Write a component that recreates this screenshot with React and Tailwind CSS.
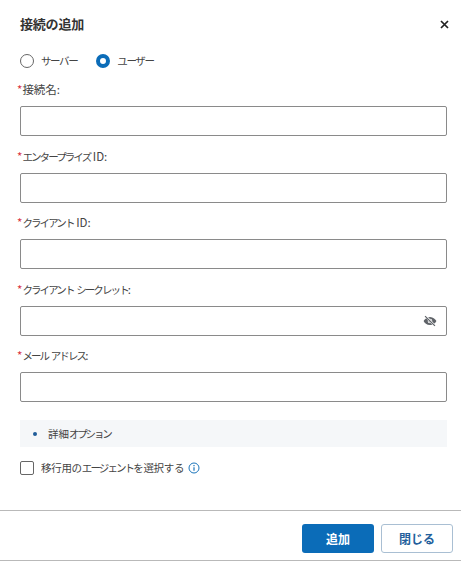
import React, { useState } from 'react';

// Katakana runs are narrower than the kanji in the reference
const Kana = ({ children }) => <span className="text-[10.5px] tracking-[-1.9px]">{children}</span>;

const fields = [
  { id: 'name', label: <span>接続名:</span> },
  { id: 'enterprise', label: <><Kana>エンタープライズ</Kana> ID:</> },
  { id: 'client', label: <><Kana>クライアント</Kana> ID:</> },
  { id: 'secret', label: <><Kana>クライアント</Kana> <Kana>シークレット</Kana>:</>, secret: true },
  { id: 'mail', label: <><Kana>メール</Kana> <Kana>アドレス</Kana>:</> },
];

const EyeOff = () => (
  <svg width="14" height="14" viewBox="0 0 24 24" fill="#5f6368">
    <path d="M12 5C6.500 5 2.500 9 1 12c1.500 3 5.500 7 11 7s9.500-4 11-7c-1.500-3-5.500-7-11-7zm0 11a4 4 0 1 1 0-8 4 4 0 0 1 0 8z" />
    <circle cx="12" cy="12" r="2.500" />
    <path d="M4 3l17 18" stroke="#fff" strokeWidth="3.500" />
    <path d="M3.500 3.500l17 17" stroke="#5f6368" strokeWidth="2" />
  </svg>
);

const App = () => {
  const [mode, setMode] = useState('user');

  return (
    <div className="w-[461px] h-[561px] bg-white flex flex-col overflow-hidden font-['Noto_Sans_CJK_JP','Liberation_Sans',sans-serif] text-[11.5px] text-[#444]">
      <div className="flex items-center justify-between pl-5 pr-[12px] pb-[2px] pt-[7px] h-[43px]">
        <h1 className="text-[13px] font-bold text-[#333] tracking-[-0.2px]">接続の追加</h1>
        <button className="text-[#222]">
          <svg width="9" height="9" viewBox="0 0 9 9" stroke="currentColor" strokeWidth="1.700"><path d="M1 1l7 7M8 1l-7 7" /></svg>
        </button>
      </div>

      <div className="flex items-center gap-[19px] pl-5 mt-[9px] h-[18px]">
        <label className="flex items-center gap-[7px]" onClick={() => setMode('server')}>
          <span className={`w-[14px] h-[14px] rounded-full ${mode === 'server' ? 'border-[4px] border-[#0b6cb8]' : 'border border-[#666]'}`} />
          <span className="text-[10.5px] tracking-[-1.4px]">サーバー</span>
        </label>
        <label className="flex items-center gap-[7px]" onClick={() => setMode('user')}>
          <span className={`w-[14px] h-[14px] rounded-full ${mode === 'user' ? 'border-[4px] border-[#0b6cb8]' : 'border border-[#666]'}`} />
          <span className="text-[10.5px] tracking-[-1.4px]">ユーザー</span>
        </label>
      </div>

      <div className="flex flex-col gap-[4.5px] mt-[4px]">
        {fields.map((f) => (
          <div key={f.id} className="flex flex-col">
            <div className="h-[32px] pl-[17px] flex items-center whitespace-pre">
              <span className="text-[#d9333f]">*</span>
              <span>{f.label}</span>
            </div>
            <div className="mx-5 w-[427px] h-[30px] border border-[#8a8a8a] rounded-[2px] flex items-center justify-end pr-[9px]">
              {f.secret && <EyeOff />}
            </div>
          </div>
        ))}
      </div>

      <div className="mx-5 w-[427px] h-[27px] mt-[18px] bg-[#f5f7f9] flex items-center pl-[13px] gap-[11px] text-[10.5px]">
        <span className="w-[4px] h-[4px] rounded-full bg-[#1f5c99]" />
        <span>詳細<span className="tracking-[-2.2px]">オプション</span></span>
      </div>

      <div className="flex items-center pl-5 mt-[13px] h-[15px]">
        <span className="w-[14px] h-[14px] border border-[#666] rounded-[2px]" />
        <span className="ml-[7px] text-[10.5px] tracking-[-0.3px]">移行用の<Kana>エージェント</Kana>を選択する</span>
        <svg className="ml-[4px]" width="12" height="12" viewBox="0 0 12 12" fill="none" stroke="#1b75bb">
          <circle cx="6" cy="6" r="5" />
          <path d="M6 5.200v3.600M6 3v1.200" strokeWidth="1.200" />
        </svg>
      </div>

      <div className="mt-[35px] h-[51px] border-t border-b border-[#b9b9b9] flex items-start justify-end gap-[7px] pr-2 pt-[13px]">
        <button className="w-[72px] h-[29px] rounded-[3px] bg-[#0b6cb8] text-white font-bold text-[12px]">追加</button>
        <button className="w-[72px] h-[29px] rounded-[3px] bg-white border border-[#a9bfd3] text-[#235f9c] font-bold text-[12px]">閉じる</button>
      </div>
    </div>
  );
};

export default App;
